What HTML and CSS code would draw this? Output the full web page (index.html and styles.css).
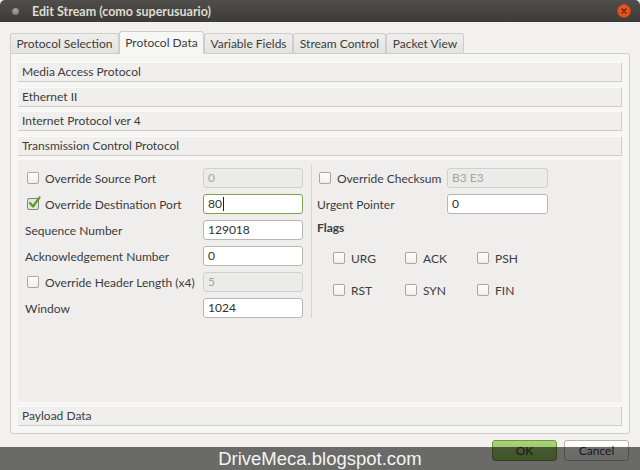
FILE: index.html
```html
<!DOCTYPE html>
<html>
<head>
<meta charset="utf-8">
<link rel="stylesheet" href="styles.css">
</head>
<body>
<div class="window">
  <header class="titlebar">
    <span class="tb-dot"></span>
    <span class="tb-title">Edit Stream (como superusuario)</span>
    <span class="tb-close"><svg width="14" height="14" viewBox="0 0 14 14"><circle cx="7" cy="7" r="6.5" fill="#e9541f" stroke="#b9431a" stroke-width="1"/><path d="M5 5 L9 9 M9 5 L5 9" stroke="#4a2312" stroke-width="1.3" stroke-linecap="round"/></svg></span>
  </header>
  <div class="dialog">
    <nav class="tabs">
      <div class="tab w1">Protocol Selection</div>
      <div class="tab w2 active">Protocol Data</div>
      <div class="tab w3">Variable Fields</div>
      <div class="tab w4">Stream Control</div>
      <div class="tab w5">Packet View</div>
    </nav>
    <section class="panel">
      <div class="hdr">Media Access Protocol</div>
      <div class="hdr">Ethernet II</div>
      <div class="hdr">Internet Protocol ver 4</div>
      <div class="hdr">Transmission Control Protocol</div>
      <div class="content">
        <div class="col-left">
          <div class="row">
            <label class="chk"><span class="box"></span>Override Source Port</label>
            <div class="field disabled">0</div>
          </div>
          <div class="row">
            <label class="chk"><span class="box checked"><svg width="14" height="14" viewBox="0 0 14 14"><path d="M3 7 L6 10.5 L12.5 1.5" fill="none" stroke="#5b9a2c" stroke-width="2.2" stroke-linecap="round" stroke-linejoin="round"/></svg></span>Override Destination Port</label>
            <div class="field focus">80<span class="caret"></span></div>
          </div>
          <div class="row">
            <label class="lbl">Sequence Number</label>
            <div class="field">129018</div>
          </div>
          <div class="row">
            <label class="lbl">Acknowledgement Number</label>
            <div class="field">0</div>
          </div>
          <div class="row">
            <label class="chk"><span class="box"></span>Override Header Length (x4)</label>
            <div class="field disabled">5</div>
          </div>
          <div class="row">
            <label class="lbl">Window</label>
            <div class="field">1024</div>
          </div>
        </div>
        <div class="divider"></div>
        <div class="col-right">
          <div class="row">
            <label class="chk"><span class="box"></span>Override Checksum</label>
            <div class="field wide disabled">B3 E3</div>
          </div>
          <div class="row">
            <label class="lbl">Urgent Pointer</label>
            <div class="field wide">0</div>
          </div>
          <div class="flags-title">Flags</div>
          <div class="flags">
            <label class="flag"><span class="box"></span>URG</label>
            <label class="flag"><span class="box"></span>ACK</label>
            <label class="flag"><span class="box"></span>PSH</label>
            <label class="flag"><span class="box"></span>RST</label>
            <label class="flag"><span class="box"></span>SYN</label>
            <label class="flag"><span class="box"></span>FIN</label>
          </div>
        </div>
      </div>
      <div class="hdr">Payload Data</div>
    </section>
    <div class="buttons">
      <button class="btn ok">OK</button>
      <button class="btn cancel">Cancel</button>
    </div>
  </div>
  <div class="watermark">DriveMeca.blogspot.com</div>
</div>
</body>
</html>
```
FILE: styles.css
```css
* { box-sizing: border-box; }
html, body { margin: 0; padding: 0; }
body {
  font-family: Lato, "Liberation Sans", sans-serif;
  font-size: 12px;
  color: #3c3c3c;
  background: #f2f1f0;
}
.window {
  position: relative;
  width: 640px;
  height: 470px;
  overflow: hidden;
  background: #f2f1f0;
}
.titlebar {
  height: 22px;
  display: flex;
  align-items: center;
  padding: 0 9px 0 12px;
  background: linear-gradient(#4f4e4a, #3c3b37);
  border-radius: 5px 5px 0 0;
}
.tb-dot {
  width: 7px;
  height: 7px;
  border-radius: 50%;
  background: radial-gradient(circle at 50% 35%, #aaa8a3, #6e6c67);
}
.tb-title {
  margin-left: 13px;
  font-weight: bold;
  font-size: 12.5px;
  color: #dfdbd2;
  flex: 1;
}
.tb-close { display: flex; }

.tabs {
  display: flex;
  align-items: flex-end;
  height: 22px;
  margin: 9px 0 0 10px;
  position: relative;
  z-index: 1;
}
.tab {
  height: 20px;
  border: 1px solid #cfcdca;
  border-bottom: none;
  border-radius: 3px 3px 0 0;
  background: linear-gradient(#efeeec, #e4e3e0);
  text-align: center;
  line-height: 19px;
  white-space: nowrap;
}
.tab.active {
  height: 23px;
  margin-bottom: -1px;
  background: #f7f7f6;
  line-height: 21px;
}
.w1 { width: 109px; }
.w2 { width: 85px; }
.w3 { width: 89px; }
.w4 { width: 93px; }
.w5 { width: 78px; }

.panel {
  margin: 0 10px;
  height: 381px;
  border: 1px solid #cfcdca;
  border-radius: 0 3px 3px 3px;
  background: #f6f6f5;
  padding: 8px 7px 7px 7px;
  display: flex;
  flex-direction: column;
  gap: 4.5px;
}
.hdr {
  height: 20px;
  flex: none;
  background: #f0efed;
  border-top: 1px solid #fbfbfa;
  border-right: 1px solid #cfcdca;
  border-bottom: 1px solid #cfcdca;
  padding-left: 4px;
  line-height: 18px;
}
.content {
  flex: 1;
  background: #efeeec;
  display: flex;
  align-items: flex-start;
  padding: 8px 0 0 7px;
}
.col-left { width: 278px; }
.row {
  display: flex;
  align-items: center;
  height: 20px;
  margin-bottom: 6px;
}
.lbl, .chk { flex: 1; display: flex; align-items: center; white-space: nowrap; }
.chk { padding-left: 2px; }
.box {
  width: 12px;
  height: 12px;
  flex: none;
  margin-right: 6px;
  border: 1px solid #a9a7a2;
  border-radius: 2px;
  background: linear-gradient(#ffffff, #f0efed);
  position: relative;
}
.box.checked {
  background: #e3e7dc;
  border-color: #7f8a72;
}
.box.checked svg {
  position: absolute;
  left: -1px;
  top: -3px;
}
.field {
  width: 100px;
  height: 20px;
  flex: none;
  border: 1px solid #b8b6b1;
  border-radius: 3px;
  background: #ffffff;
  padding-left: 4px;
  line-height: 18px;
  color: #2f2f2f;
  display: flex;
  align-items: center;
}
.field.wide { width: 101px; }
.field.disabled {
  background: #ebebea;
  border-color: #d2d0cc;
  color: #a5a4a0;
}
.field.focus { border-color: #7ea44f; }
.caret {
  width: 1px;
  height: 14px;
  background: #222;
  margin-left: 1px;
}
.divider {
  width: 1px;
  height: 153px;
  margin: -3px 5px 0 8px;
  background: #d6d4d0;
}
.col-right { width: 231px; }
.flags-title {
  font-weight: bold;
  line-height: 20px;
  height: 20px;
  margin-top: -2px;
}
.flags {
  display: grid;
  grid-template-columns: 72px 72px 72px;
  row-gap: 12px;
  padding-left: 16px;
  margin-top: 10px;
}
.flag {
  display: flex;
  align-items: center;
  height: 20px;
}
.buttons {
  display: flex;
  justify-content: flex-end;
  gap: 7px;
  padding-right: 11px;
  margin-top: 6px;
}
.btn {
  width: 65px;
  height: 21px;
  border-radius: 3px;
  font-family: Lato, "Liberation Sans", sans-serif;
  font-size: 12px;
  color: #3c3c3c;
  padding: 0;
}
.btn.ok {
  background: linear-gradient(#aad27c, #8fbd5b);
  border: 1px solid #6e9a3d;
}
.btn.cancel {
  background: linear-gradient(#ffffff, #f1f0ee);
  border: 1px solid #b5b3ae;
}
.watermark {
  position: absolute;
  left: 0;
  right: 0;
  bottom: 0;
  height: 23px;
  background: rgba(0, 0, 0, 0.56);
  color: #f4f4f4;
  font-family: "Liberation Sans", Arial, sans-serif;
  font-size: 18.5px;
  line-height: 23px;
  text-align: center;
}
```
